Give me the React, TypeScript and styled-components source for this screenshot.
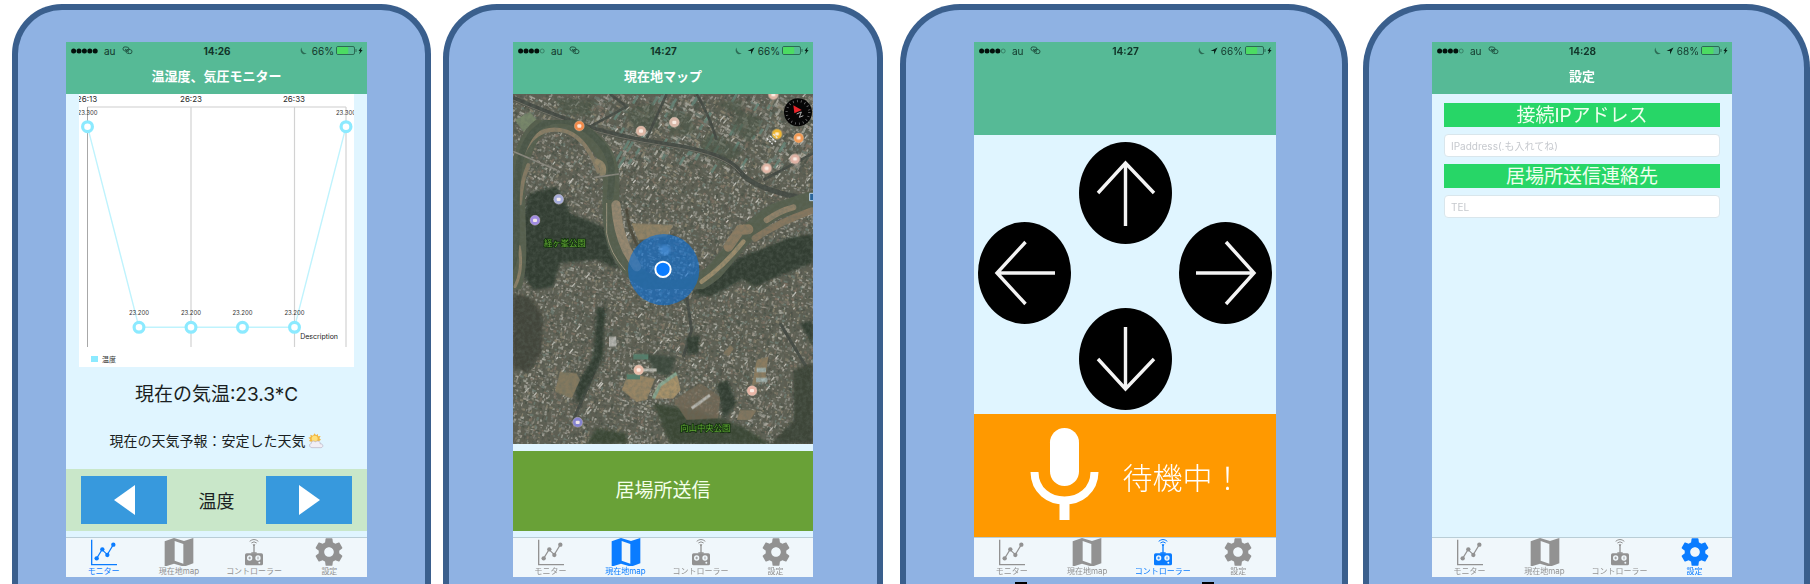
import React from "react";
import styled, { createGlobalStyle, css } from "styled-components";

const GlobalStyle = createGlobalStyle`
  * { box-sizing: border-box; }
  body {
    margin: 0;
    background: #ffffff;
    font-family: Inter, "Noto Sans CJK JP", sans-serif;
    color: #1a1f22;
  }
  button, input { font-family: inherit; color: inherit; }
`;

/* ---------- Page and device frames ---------- */

const Page = styled.main`
  display: grid;
  grid-template-columns: 419fr 440fr 453fr 450fr;
  column-gap: 12px;
  height: 100vh;
  padding: 4px 0 0 12px;
  overflow: hidden;
`;

const Phone = styled.section<{ $left: number; $right: number; $radius: number; $indent?: number }>`
  min-width: 0;
  min-height: 640px;
  margin-left: ${(p) => p.$indent ?? 0}px;
  padding: 32px ${(p) => p.$right}px 0 ${(p) => p.$left}px;
  border: 6px solid #3a5f8d;
  border-bottom: 0;
  border-radius: ${(p) => p.$radius}px ${(p) => p.$radius}px 0 0;
  background: #8fb2e3;
`;

const Screen = styled.div`
  display: flex;
  flex-direction: column;
  min-height: 535px;
  background: #e0f5ff;
`;

const Content = styled.div`
  display: flex;
  flex-direction: column;
  flex: 1;
  padding-bottom: 6px;
`;

/* ---------- Header ---------- */

const Header = styled.header<{ $tall?: boolean }>`
  height: ${(p) => (p.$tall ? 93 : 52)}px;
  background: #56ba96;
`;

const StatusBar = styled.div`
  display: grid;
  grid-template-columns: 1fr auto 1fr;
  align-items: center;
  height: 17px;
  padding: 0 4px 0 5px;
  font-size: 10px;
  line-height: 12px;
  color: #12352a;
`;

const StatusGroup = styled.div<{ $end?: boolean }>`
  display: flex;
  align-items: center;
  gap: ${(p) => (p.$end ? 2 : 6)}px;
  justify-content: ${(p) => (p.$end ? "flex-end" : "flex-start")};
`;

const Clock = styled.time`
  font-size: 10px;
  font-weight: 700;
`;

const Title = styled.h1`
  margin: 0;
  font-size: 13px;
  line-height: 35px;
  font-weight: 600;
  text-align: center;
  color: #ffffff;
`;

/* ---------- Tab bar ---------- */

const TabBar = styled.nav`
  display: grid;
  grid-template-columns: repeat(4, 1fr);
  height: 40px;
  border-top: 1px solid #b9cdd6;
  background: #f0f7fb;
`;

const Tab = styled.button<{ $active: boolean }>`
  display: flex;
  flex-direction: column;
  align-items: center;
  padding: 0;
  border: 0;
  background: none;
  font-size: 8px;
  line-height: 10px;
  white-space: nowrap;
  color: ${(p) => (p.$active ? "#0a7cff" : "#929292")};
`;

/* ---------- Monitor ---------- */

const ChartCard = styled.figure`
  margin: 0 13px;
  height: 273px;
  background: #ffffff;
  svg { display: block; width: 100%; height: 100%; }
`;

const Readings = styled.div`
  display: flex;
  flex-direction: column;
  align-items: center;
  gap: 22px;
  height: 102px;
  padding-top: 14px;
`;

const Temperature = styled.p`
  margin: 0;
  font-size: 19px;
  line-height: 28px;
  white-space: nowrap;
`;

const Forecast = styled.p`
  display: flex;
  align-items: center;
  gap: 2px;
  margin: 0;
  font-size: 14px;
  line-height: 20px;
  white-space: nowrap;
`;

const Switcher = styled.div`
  display: flex;
  align-items: center;
  justify-content: space-between;
  height: 62px;
  padding: 0 15px;
  background: #c9e7c9;
  font-size: 18px;
`;

const StepButton = styled.button`
  display: grid;
  place-items: center;
  width: 86px;
  height: 48px;
  padding: 0;
  border: 0;
  background: #3799dd;
`;

/* ---------- Map ---------- */

const MapView = styled.div`
  height: 350px;
  svg { display: block; width: 100%; height: 100%; }
`;

const SendButton = styled.button`
  height: 80px;
  margin-top: 7px;
  border: 0;
  background: #69a137;
  font-size: 19px;
  line-height: 28px;
  && { color: #f4ffe9; }
`;

/* ---------- Controller ---------- */

const Pad = styled.div`
  display: flex;
  justify-content: space-between;
  height: 279px;
  padding: 7px 4px 0;
`;

const PadColumn = styled.div<{ $middle?: boolean }>`
  display: flex;
  flex-direction: column;
  gap: 64px;
  ${(p) => !p.$middle && css`padding-top: 80px;`}
`;

const ArrowButton = styled.button`
  width: 93px;
  height: 102px;
  padding: 0;
  border: 0;
  border-radius: 50%;
  background: #000000;
  svg { display: block; }
`;

const VoiceButton = styled.button`
  display: flex;
  align-items: center;
  justify-content: center;
  gap: 24px;
  height: 123px;
  padding: 0 0 4px 22px;
  border: 0;
  background: #ff9900;
  font-size: 30px;
  line-height: 40px;
  font-weight: 300;
  && { color: #ffffff; }
`;

const VoiceLabel = styled.span`
  padding-top: 8px;
`;

const ControllerBody = styled(Content)`
  padding-bottom: 0;
`;

const Brackets = styled.div`
  display: flex;
  justify-content: space-between;
  padding: 5px 62px 0 41px;
`;

const Bracket = styled.span`
  width: 12px;
  height: 12px;
  border-top: 3px solid #000000;
`;

/* ---------- Settings ---------- */

const Form = styled.form`
  display: flex;
  flex-direction: column;
  gap: 7px;
  padding: 9px 12px 0;
`;

const FieldLabel = styled.label`
  height: 24px;
  background: #27d667;
  font-size: 19px;
  line-height: 26px;
  text-align: center;
  color: #efffee;
`;

const Field = styled.input`
  width: 100%;
  height: 23px;
  padding: 0 6px;
  border: 1px solid #d9e6ec;
  border-radius: 4px;
  background: #ffffff;
  font-size: 10px;
  &::placeholder { color: #c6c9ce; opacity: 1; }
`;

/* ---------- Icons ---------- */

const LinkIcon = () => (
  <svg width="11" height="9" viewBox="0 0 22 18" fill="none" stroke="currentColor" strokeWidth="1.8" opacity="0.8">
    <rect x="2" y="2" width="12" height="8" rx="4" transform="rotate(8 8 6)" />
    <rect x="8" y="7" width="12" height="8" rx="4" transform="rotate(8 14 11)" />
    <path d="M6 6l8 7" />
  </svg>
);

const MoonIcon = () => (
  <svg width="10" height="8" viewBox="0 0 20 16">
    <path d="M3 1C0 5 1 12 6 14c3 1 6 0 7-2C8 13 3 8 3 1z" fill="#2c6b55" />
  </svg>
);

const LocationIcon = () => (
  <svg width="9" height="8" viewBox="0 0 18 16">
    <path d="M15 1L1 8h7v7z" fill="#0b241c" />
  </svg>
);

const BatteryIcon = ({ level }: { level: number }) => (
  <svg width="27" height="9" viewBox="0 0 27 9">
    <rect x="0.5" y="0.5" width="18" height="8" rx="1.5" fill="none" stroke="#2c6b55" />
    <rect x="1" y="1" width={(17 * level) / 100} height="7" rx="1" fill="#4cdb62" />
    <path d="M19.5 3h1v3h-1z" fill="#2c6b55" />
    <path d="M25.5 1L22.5 5h1.5l-0.8 3.2L26.6 4H25z" fill="#0b241c" />
  </svg>
);

const Signal = ({ bars }: { bars: number }) => (
  <svg width="27" height="6" viewBox="0 0 27 6" aria-hidden="true">
    {[0, 1, 2, 3, 4].map((i) => (
      <circle
        key={i}
        cx={2.6 + i * 5.4}
        cy="3"
        r={i < bars ? 2.5 : 2}
        fill={i < bars ? "#04110c" : "none"}
        stroke={i < bars ? "none" : "#2c6b55"}
        strokeWidth="0.7"
      />
    ))}
  </svg>
);

const GraphIcon = () => (
  <svg width="28" height="28" viewBox="0 0 84 84">
    <path d="M5 5V80H81" fill="none" stroke="currentColor" strokeWidth="4" />
    <path d="M20 61L36 35L52 50L70 20" fill="none" stroke="currentColor" strokeWidth="3.5" />
    {[[20, 61], [37, 34], [52, 51], [70, 20]].map(([x, y]) => (
      <circle key={x} cx={x} cy={y} r="6.5" fill="currentColor" />
    ))}
  </svg>
);

const MapIcon = () => (
  <svg width="30" height="28" viewBox="0 0 90 84" fill="currentColor">
    <path
      fillRule="evenodd"
      d="M2 10L30 0L60 9L88 0V76L60 86L30 77L2 86V10zM32 9V68L58 77V18z"
    />
  </svg>
);

const ControllerIcon = () => (
  <svg width="28" height="28" viewBox="0 0 84 84">
    <g fill="none" stroke="currentColor" strokeWidth="3">
      <path d="M29 10Q42 -1 55 10" />
      <path d="M34 15Q42 8 50 15" />
    </g>
    <path d="M38 19h8l-2 6v18h6v4H34v-4h6V25z" fill="currentColor" />
    <rect x="15" y="46" width="54" height="36" rx="5" fill="currentColor" />
    <circle cx="29" cy="60" r="8" fill="#f0f7fb" />
    <circle cx="54" cy="60" r="8" fill="#f0f7fb" />
    <path d="M25 60h8M29 56v8M54 56v8" stroke="currentColor" strokeWidth="2.5" />
    <circle cx="58" cy="74" r="3" fill="#f0f7fb" />
  </svg>
);

const GearIcon = () => (
  <svg width="28" height="28" viewBox="1.8 1.8 20.4 20.4" fill="currentColor">
    <path d="M19.43 12.98c.04-.32.07-.64.07-.98s-.03-.66-.07-.98l2.11-1.65c.19-.15.24-.42.12-.64l-2-3.46c-.12-.22-.39-.3-.61-.22l-2.49 1c-.52-.4-1.08-.73-1.69-.98l-.38-2.65C14.46 2.18 14.25 2 14 2h-4c-.25 0-.46.18-.49.42l-.38 2.65c-.61.25-1.17.59-1.69.98l-2.49-1c-.23-.09-.49 0-.61.22l-2 3.46c-.13.22-.07.49.12.64l2.11 1.65c-.04.32-.07.65-.07.98s.03.66.07.98l-2.11 1.65c-.19.15-.24.42-.12.64l2 3.46c.12.22.39.3.61.22l2.49-1c.52.4 1.08.73 1.69.98l.38 2.65c.03.24.24.42.49.42h4c.25 0 .46-.18.49-.42l.38-2.65c.61-.25 1.17-.59 1.69-.98l2.49 1c.23.09.49 0 .61-.22l2-3.46c.12-.22.07-.49-.12-.64l-2.11-1.65zM12 15.500c-1.93 0-3.500-1.570-3.500-3.500s1.570-3.500 3.500-3.500 3.500 1.570 3.500 3.500-1.570 3.500-3.500 3.500z" />
  </svg>
);

const WeatherIcon = () => (
  <svg width="16" height="16" viewBox="0 0 48 48" role="img" aria-label="晴れ時々くもり">
    <path
      d="M20 1l4 6 6-4v7l8-1-4 7 5 4-9 6H10l-7-2 4-5-6-5 7-2-1-7 8 3z"
      fill="#f2b640"
    />
    <circle cx="20" cy="17" r="9" fill="#ffe07a" />
    <path
      d="M12 44c-8 0-10-11-2-13 0-8 9-9 12-4 5-6 16-3 14 5 11 0 11 12 2 12z"
      fill="#f1eef5"
      stroke="#b4adc0"
      strokeWidth="2"
    />
  </svg>
);

const Triangle = ({ flip }: { flip?: boolean }) => (
  <svg width="21" height="30" viewBox="0 0 21 30">
    <path d={flip ? "M0 0L21 15L0 30z" : "M21 0L0 15L21 30z"} fill="#ffffff" />
  </svg>
);

const arrows = {
  上: "M46.5 84V21M19 51L46.5 21L75 51",
  下: "M46.5 19V81M19 51L46.5 81L75 51",
  左: "M77 51H19M47.5 20L19 51L47.5 82",
  右: "M17 51H75M47 20L75 51L47 82",
};

const Arrow = ({ to }: { to: keyof typeof arrows }) => (
  <ArrowButton type="button" aria-label={to}>
    <svg width="93" height="102" viewBox="0 0 93 102">
      <path d={arrows[to]} fill="none" stroke="#f4f4f4" strokeWidth="3.4" />
    </svg>
  </ArrowButton>
);

const MicIcon = () => (
  <svg width="69" height="92" viewBox="0 0 69 92">
    <rect x="20" y="0" width="29" height="58" rx="14.5" fill="#ffffff" />
    <path d="M4.5 44C5 82 64 82 64.5 44" fill="none" stroke="#ffffff" strokeWidth="8" />
    <rect x="29.5" y="72" width="10" height="20" fill="#ffffff" />
  </svg>
);

/* ---------- Shared pieces ---------- */

type StatusProps = { time: string; battery: number; bars: number; located?: boolean };

const Status = ({ time, battery, bars, located }: StatusProps) => (
  <StatusBar>
    <StatusGroup>
      <Signal bars={bars} />
      <span>au</span>
      <LinkIcon />
    </StatusGroup>
    <Clock>{time}</Clock>
    <StatusGroup $end>
      <MoonIcon />
      {located && <LocationIcon />}
      <span>{battery}%</span>
      <BatteryIcon level={battery} />
    </StatusGroup>
  </StatusBar>
);

const tabs = [
  { label: "モニター", Icon: GraphIcon },
  { label: "現在地map", Icon: MapIcon },
  { label: "コントローラー", Icon: ControllerIcon },
  { label: "設定", Icon: GearIcon },
];

const Tabs = ({ active }: { active: number }) => (
  <TabBar>
    {tabs.map(({ label, Icon }, i) => (
      <Tab key={label} type="button" $active={i === active}>
        <Icon />
        <span>{label}</span>
      </Tab>
    ))}
  </TabBar>
);

/* ---------- Chart ---------- */

const points = [
  { x: 8.5, y: 32.7, value: "23.300" },
  { x: 60, y: 233.3, value: "23.200" },
  { x: 112, y: 233.3, value: "23.200" },
  { x: 163.5, y: 233.3, value: "23.200" },
  { x: 215.5, y: 233.3, value: "23.200" },
  { x: 267, y: 32.7, value: "23.300" },
];

const Chart = () => (
  <svg viewBox="0 0 275 273" fontFamily='Inter, "Noto Sans CJK JP", sans-serif'>
    <path d="M8.5 13H267" stroke="#dedede" strokeWidth="1.5" />
    <path d="M112 13V253M215.5 13V253M267 13V253" stroke="#d2d2d2" strokeWidth="1.2" />
    <path d="M8.5 13V253" stroke="#a8a8a8" strokeWidth="1" />
    <g fontSize="8" textAnchor="middle" fill="#2b2b2b">
      <text x="8" y="8">26:13</text>
      <text x="112" y="8">26:23</text>
      <text x="215" y="8">26:33</text>
    </g>
    <polyline
      points={points.map((p) => `${p.x},${p.y}`).join(" ")}
      fill="none"
      stroke="#bff3fd"
      strokeWidth="1.4"
    />
    {points.map((p) => (
      <g key={p.x}>
        <circle cx={p.x} cy={p.y} r="4.9" fill="#ffffff" stroke="#8ceaff" strokeWidth="3.2" />
        <text x={p.x} y={p.y - 12} fontSize="6" textAnchor="middle" fill="#333333">
          {p.value}
        </text>
      </g>
    ))}
    <text x="259" y="245" fontSize="7" textAnchor="end" fill="#222222">Description</text>
    <rect x="12" y="262" width="7" height="6" fill="#8ceaff" />
    <text x="23" y="268" fontSize="7" fill="#333333">温度</text>
  </svg>
);

/* ---------- Satellite map ---------- */

const random = (seed: number) => {
  let s = seed;
  return () => {
    s = (s * 1664525 + 1013904223) % 4294967296;
    return s / 4294967296;
  };
};

const roofTones = [
  "#94948c", "#83827a", "#a5a39a", "#757368", "#9a958a", "#6f7d73",
  "#b2b0a6", "#69675c", "#88826f", "#7d7061", "#51534a", "#4a5146",
];

const buildRoofs = () => {
  const next = random(41);
  const layers = roofTones.map(() => "");
  for (let y = 14; y < 1062; y += 8) {
    for (let x = 10; x < 912; x += 9) {
      if (next() < 0.1) continue;
      const north = y < 400 - x * 0.15;
      const angle = (north ? 0.5 : 0.3) + (next() < 0.45 ? Math.PI / 2 : 0);
      const large = y < 230 && x > 250 && next() < 0.22;
      const w = (large ? 16 : 4) + next() * 8;
      const h = (large ? 5 : 3) + next() * 4;
      const cx = x + next() * 8;
      const cy = y + next() * 7;
      const c = Math.cos(angle);
      const s = Math.sin(angle);
      const tone = Math.floor(next() * roofTones.length);
      layers[tone] += `M${cx.toFixed(1)} ${cy.toFixed(1)}l${(w * c).toFixed(1)} ${(w * s).toFixed(1)}l${(-h * s).toFixed(1)} ${(h * c).toFixed(1)}l${(-w * c).toFixed(1)} ${(-w * s).toFixed(1)}z`;
    }
  }
  return layers;
};

const roofs = buildRoofs();

const buildHighlights = () => {
  const next = random(7);
  let pale = "";
  let teal = "";
  for (let i = 0; i < 150; i++) {
    const x = 20 + next() * 880;
    const y = 20 + next() * 1030;
    const l = 4 + next() * 9;
    pale += `M${x.toFixed(0)} ${y.toFixed(0)}l${l.toFixed(0)} ${(-l * 1.2).toFixed(0)}`;
  }
  for (let i = 0; i < 50; i++) {
    const x = 250 + next() * 560;
    const y = 30 + next() * 220;
    const l = 12 + next() * 22;
    teal += `M${x.toFixed(0)} ${y.toFixed(0)}l${(l * 0.6).toFixed(0)} ${(-l).toFixed(0)}`;
  }
  return { pale, teal };
};

const highlights = buildHighlights();

const shopPins = [
  { x: 208, y: 108, color: "#f08a4a" },
  { x: 393, y: 123, color: "#dcb6a4" },
  { x: 493, y: 97, color: "#d8b7a8" },
  { x: 790, y: 14, color: "#e0b8a6" },
  { x: 801, y: 132, color: "#f0b62c" },
  { x: 866, y: 144, color: "#f09a55" },
  { x: 855, y: 207, color: "#dfb2a4" },
  { x: 770, y: 235, color: "#e4b8a8" },
  { x: 146, y: 328, color: "#a5acd9" },
  { x: 75, y: 391, color: "#a08be0" },
  { x: 386, y: 840, color: "#e8bba8" },
  { x: 726, y: 902, color: "#e8b5a6" },
  { x: 203, y: 997, color: "#8583cf" },
];

const SatelliteMap = () => (
  <svg
    viewBox="9 12 900 1050"
    preserveAspectRatio="xMidYMid slice"
    role="img"
    aria-label="現在地の航空写真"
    fontFamily='"Noto Sans CJK JP", sans-serif'
  >
    <defs>
      <filter id="grain" x="0" y="0" width="100%" height="100%">
        <feTurbulence type="fractalNoise" baseFrequency="0.09" numOctaves="3" seed="4" />
        <feColorMatrix values="0 0 0 0 0.12  0 0 0 0 0.15  0 0 0 0 0.12  1.6 0 0 0 -0.55" />
      </filter>
      <filter id="soft" x="-5%" y="-5%" width="110%" height="110%">
        <feGaussianBlur stdDeviation="5" />
      </filter>
      <filter id="roofsoft" x="0" y="0" width="100%" height="100%">
        <feGaussianBlur stdDeviation="1.4" />
      </filter>
    </defs>
    <rect x="9" y="12" width="900" height="1050" fill="#5d5e52" />
    <g filter="url(#roofsoft)">
      {roofs.map((d, i) => (
        <path key={roofTones[i]} d={d} fill={roofTones[i]} opacity="0.85" />
      ))}
      <path d={highlights.teal} stroke="#66877a" strokeWidth="8" opacity="0.85" />
      <path d={highlights.pale} stroke="#c4c3bb" strokeWidth="4" />
    </g>

    {/* Gardens and parks of the northern blocks */}
    <g fill="#4a5444" opacity="0.6" filter="url(#soft)">
      <path d="M340 60L430 40L450 110L380 130zM470 60L540 70L560 130L480 140zM590 130L650 150L700 190L640 230L570 170zM130 20L260 30L240 80L160 70zM690 60L760 90L720 160L660 120zM620 40L700 30L690 80z" />
    </g>

    {/* Roads and the railway */}
    <g fill="none" stroke="#454a44">
      <path d="M9 25Q90 60 200 100T480 165T690 245T909 330" strokeWidth="15" />
      <path d="M470 12L410 145M560 12Q600 80 620 150M300 12L350 50L240 110M909 190L760 270" strokeWidth="8" />
      <path d="M280 660L260 830L190 990M530 620L545 720L520 800M810 700L900 850" strokeWidth="9" />
    </g>
    <path d="M9 30Q90 65 200 105T480 170T690 250" fill="none" stroke="#8b8577" strokeWidth="2" />

    {/* Woods */}
    <g fill="#303d33" filter="url(#soft)">
      <path d="M55 310L140 290L170 340L180 370L260 400L290 420L300 480L330 540L260 510L150 520L130 590L70 600L40 560L35 400z" />
      <path d="M909 430L830 445L760 475L690 500L600 570L540 610L600 620L700 570L740 590L800 560L909 520z" />
      <path d="M9 610L60 620L100 680L95 790L50 850L9 830z" fill="#42453a" />
      <path d="M850 840L909 820V1062H780L850 990z" fill="#3d4539" />
      <path d="M230 1062L260 1015L350 1030V1062zM430 940L560 960L700 1010L780 1062H480z" fill="#3b4634" />
      <path d="M530 740L570 735L565 790L530 795zM620 880L655 870L680 940L640 990zM260 650L285 650L280 800L230 900L200 950L195 890L250 800zM870 700L909 690V770z" />
      <path d="M400 790L500 800L480 860L440 850z" fill="#3c4a3e" />
    </g>

    {/* Open ground */}
    <g filter="url(#roofsoft)">
      <path d="M15 90L60 65L80 90L40 125z" fill="#78876a" />
      <path d="M150 845L200 850L210 870L185 925L135 905z" fill="#84795f" />
      <path d="M355 850L435 865L410 930L380 935L335 900z" fill="#998665" />
      <path d="M440 890L500 850L512 900L490 925L425 925z" fill="#a8926b" />
      <path d="M430 925L450 885L500 850" fill="none" stroke="#89a892" strokeWidth="10" />
      <path d="M490 930L570 880L630 920L625 985L530 990z" fill="#756955" opacity="0.8" />
      <path d="M545 955L600 915" stroke="#b6b5ae" strokeWidth="9" />
      <path d="M740 810L775 800L765 870L725 890z" fill="#8c7c60" />
      <path d="M365 400L490 405L470 440L385 450z" fill="#928366" />
      <path d="M297 740h22v30h-22z" fill="#b6b5b0" />
      <path d="M740 840h28M738 870h34" stroke="#a5b5b2" strokeWidth="13" />
      <path d="M370 800h45M350 860h40" stroke="#55806d" strokeWidth="16" />
      <path d="M395 840h45" stroke="#c4c2b9" strokeWidth="9" />
      <path d="M690 960L740 960L720 990L680 990zM640 790L660 765L672 775L655 800z" fill="#83765e" />
    </g>

    {/* River with sand banks */}
    <g fill="none" strokeLinecap="round" filter="url(#roofsoft)">
      <path
        d="M10 590C45 480 0 330 34 210C66 88 140 70 218 128C300 180 310 240 302 330C300 420 315 495 378 552C455 612 540 608 615 543C685 460 725 405 795 364L925 322"
        stroke="#565f4e"
        strokeWidth="50"
      />
      <path d="M40 190Q75 110 150 120T265 245" stroke="#8b7e66" strokeWidth="12" />
      <path d="M30 340Q35 270 55 225" stroke="#857a63" strokeWidth="12" />
      <path d="M262 215Q285 225 278 250" stroke="#938669" strokeWidth="18" />
      <path d="M15 590Q40 540 28 470" stroke="#8d8167" strokeWidth="9" />
      <path
        d="M5 530C35 450 5 330 30 210C62 85 150 65 230 120C310 180 312 230 300 320"
        stroke="#4c5747"
        strokeWidth="20"
      />
      <path d="M318 345Q322 420 350 480L380 530" stroke="#978870" strokeWidth="28" />
      <path d="M350 360Q355 420 385 470" stroke="#4d4a3b" strokeWidth="9" />
      <path d="M655 470L690 420L715 418" stroke="#8d7c62" strokeWidth="30" />
      <path d="M575 575Q640 530 700 455" stroke="#9b8c6c" strokeWidth="14" />
      <path d="M735 445Q800 400 905 362" stroke="#87775e" strokeWidth="20" />
      <path d="M770 390Q810 362 850 352" stroke="#918269" strokeWidth="18" />
      <path d="M290 340V430Q300 490 345 540" stroke="#a19781" strokeWidth="3" />
      <path d="M12 185L140 240M255 262L325 252" stroke="#8d8a80" strokeWidth="5" />
    </g>
    <rect x="9" y="12" width="900" height="1050" filter="url(#grain)" opacity="0.5" />

    {/* Places */}
    {shopPins.map((p) => (
      <g key={`${p.x}-${p.y}`}>
        <circle cx={p.x} cy={p.y} r="15" fill={p.color} stroke="#d9c8bb" strokeOpacity="0.5" strokeWidth="2" />
        <rect x={p.x - 6} y={p.y - 5} width="12" height="10" rx="3" fill="#fff5ec" opacity="0.85" />
      </g>
    ))}
    <path d="M770 145l18 18M780 138l18 18M790 132l14 14" stroke="#e4e4e4" strokeWidth="4" strokeDasharray="7 3" />
    <path d="M912 310H899V332H912" fill="#28649a" stroke="#bcd3e6" strokeWidth="3" />
    <g fontSize="25" fill="#62a834" stroke="#14330f" strokeWidth="5" paintOrder="stroke">
      <text x="102" y="467">経ヶ峯公園</text>
      <text x="511" y="1024">向山中央公園</text>
    </g>

    {/* Current position */}
    <circle cx="461" cy="539" r="107" fill="#0b6fd6" opacity="0.62" />
    <circle cx="465" cy="480" r="16" fill="#5aa5f5" opacity="0.45" filter="url(#soft)" />
    <circle cx="459" cy="538" r="23" fill="#0a7cff" stroke="#ffffff" strokeWidth="6" />

    {/* Compass */}
    <circle cx="864" cy="67" r="42" fill="#060606" />
    <circle cx="864" cy="67" r="34" fill="none" stroke="#7d7d7d" strokeWidth="7" strokeDasharray="2 10" />
    <path d="M850 46L875 60L853 70z" fill="#e8252b" />
    <path d="M860 72l14-6l-6 16l12-5" fill="none" stroke="#b0b0b0" strokeWidth="3" />
  </svg>
);

/* ---------- App ---------- */

export default function App() {
  return (
    <>
      <GlobalStyle />
      <Page lang="ja">
        <Phone $left={48} $right={58} $radius={50}>
          <Screen>
            <Header>
              <Status time="14:26" battery={66} bars={5} />
              <Title>温湿度、気圧モニター</Title>
            </Header>
            <Content>
              <ChartCard>
                <Chart />
              </ChartCard>
              <Readings>
                <Temperature>現在の気温:23.3*C</Temperature>
                <Forecast>
                  現在の天気予報：安定した天気
                  <WeatherIcon />
                </Forecast>
              </Readings>
              <Switcher>
                <StepButton type="button" aria-label="前へ">
                  <Triangle />
                </StepButton>
                <span>温度</span>
                <StepButton type="button" aria-label="次へ">
                  <Triangle flip />
                </StepButton>
              </Switcher>
            </Content>
            <Tabs active={0} />
          </Screen>
        </Phone>

        <Phone $left={64} $right={64} $radius={54}>
          <Screen>
            <Header>
              <Status time="14:27" battery={66} bars={4} located />
              <Title>現在地マップ</Title>
            </Header>
            <Content>
              <MapView>
                <SatelliteMap />
              </MapView>
              <SendButton type="button">居場所送信</SendButton>
            </Content>
            <Tabs active={1} />
          </Screen>
        </Phone>

        <Phone $left={68} $right={66} $radius={60} $indent={5}>
          <Screen>
            <Header $tall>
              <Status time="14:27" battery={66} bars={4} located />
            </Header>
            <ControllerBody>
              <Pad>
                <PadColumn>
                  <Arrow to="左" />
                </PadColumn>
                <PadColumn $middle>
                  <Arrow to="上" />
                  <Arrow to="下" />
                </PadColumn>
                <PadColumn>
                  <Arrow to="右" />
                </PadColumn>
              </Pad>
              <VoiceButton type="button">
                <MicIcon />
                <VoiceLabel>待機中！</VoiceLabel>
              </VoiceButton>
            </ControllerBody>
            <Tabs active={2} />
          </Screen>
          <Brackets aria-hidden="true">
            <Bracket />
            <Bracket />
          </Brackets>
        </Phone>

        <Phone $left={63} $right={72} $radius={64} $indent={3}>
          <Screen>
            <Header>
              <Status time="14:28" battery={68} bars={4} located />
              <Title>設定</Title>
            </Header>
            <Content>
              <Form>
                <FieldLabel htmlFor="ip">接続IPアドレス</FieldLabel>
                <Field id="ip" type="text" placeholder="IPaddress(.も入れてね)" />
                <FieldLabel htmlFor="tel">居場所送信連絡先</FieldLabel>
                <Field id="tel" type="tel" placeholder="TEL" />
              </Form>
            </Content>
            <Tabs active={3} />
          </Screen>
        </Phone>
      </Page>
    </>
  );
}
